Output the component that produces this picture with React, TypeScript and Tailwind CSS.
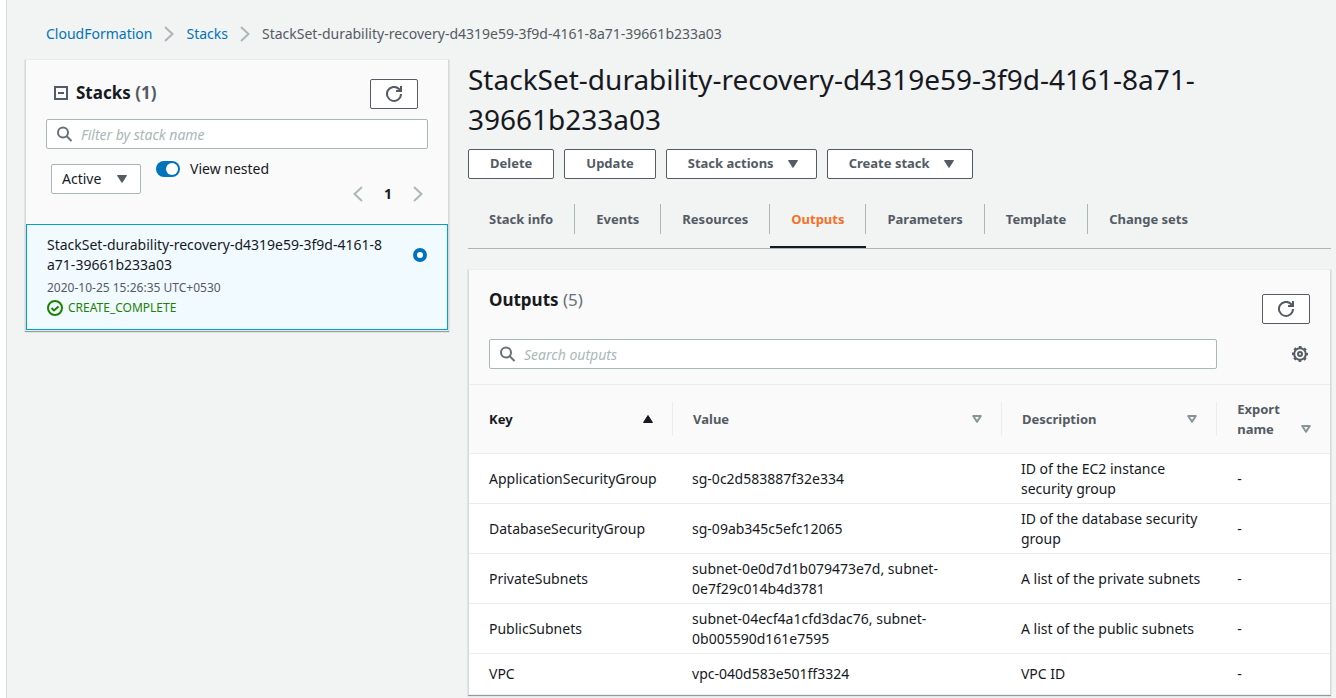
import React, { useState, type ReactNode } from "react";

const FULL_NAME = "StackSet-durability-recovery-d4319e59-3f9d-4161-8a71-39661b233a03";

const TABS = ["Stack info", "Events", "Resources", "Outputs", "Parameters", "Template", "Change sets"];

const OUTPUTS = [
  { key: "ApplicationSecurityGroup", value: "sg-0c2d583887f32e334", description: "ID of the EC2 instance security group" },
  { key: "DatabaseSecurityGroup", value: "sg-09ab345c5efc12065", description: "ID of the database security group" },
  { key: "PrivateSubnets", value: "subnet-0e0d7d1b079473e7d, subnet-0e7f29c014b4d3781", description: "A list of the private subnets" },
  { key: "PublicSubnets", value: "subnet-04ecf4a1cfd3dac76, subnet-0b005590d161e7595", description: "A list of the public subnets" },
  { key: "VPC", value: "vpc-040d583e501ff3324", description: "VPC ID" },
];

function Chevron({ flip = false }: { flip?: boolean }) {
  return (
    <svg viewBox="0 0 10 16" className={flip ? "h-4 w-2.5 rotate-180" : "h-4 w-2.5"} fill="none" stroke="#aab7b8" strokeWidth="2" aria-hidden="true">
      <path d="M1 1l7.5 7L1 15" />
    </svg>
  );
}

function SearchIcon() {
  return (
    <svg viewBox="0 0 16 16" className="size-4 shrink-0" fill="none" stroke="#687078" strokeWidth="2" aria-hidden="true">
      <circle cx="6" cy="6.500" r="5" />
      <path d="M9.500 10l5 5" />
    </svg>
  );
}

function RefreshIcon() {
  return (
    <svg viewBox="0 0 16 16" className="size-4" fill="none" stroke="#545b64" strokeWidth="2" aria-hidden="true">
      <path d="M15 8a7 7 0 1 1-2-5l2 2" />
      <path d="M15 0v5h-5" />
    </svg>
  );
}

function CaretDown({ className = "" }: { className?: string }) {
  return (
    <svg viewBox="0 0 10 8" className={"h-2 w-2.5 shrink-0 " + className} fill="#545b64" stroke="#545b64" strokeLinejoin="round" aria-hidden="true">
      <path d="M.5.5h9L5 7.5z" />
    </svg>
  );
}

function SortIcon({ active = false }: { active?: boolean }) {
  return active ? (
    <svg viewBox="0 0 10 8" className="h-2 w-2.5 shrink-0" fill="#16191f" stroke="#16191f" strokeLinejoin="round" aria-hidden="true">
      <path d="M.5 7.5h9L5 .5z" />
    </svg>
  ) : (
    <svg viewBox="0 0 10 8" className="h-2 w-2.5 shrink-0" fill="none" stroke="#879596" strokeWidth="2" strokeLinejoin="round" aria-hidden="true">
      <path d="M1.200 1h7.600L5 6.800z" />
    </svg>
  );
}

function GearIcon() {
  return (
    <svg viewBox="0 0 16 16" className="size-4" fill="none" stroke="#545b64" strokeWidth="2" aria-hidden="true">
      <circle cx="8" cy="8" r="5.800" />
      <circle cx="8" cy="8" r="7" strokeDasharray="2.749 2.749" strokeDashoffset="1.374" />
      <circle cx="8" cy="8" r="2" />
    </svg>
  );
}

function RefreshButton() {
  return (
    <button type="button" aria-label="Refresh" className="flex h-[30px] w-12 items-center justify-center rounded-xs border border-[#545b64] bg-white">
      <RefreshIcon />
    </button>
  );
}

function ActionButton({ children, menu = false }: { children: ReactNode; menu?: boolean }) {
  return (
    <button type="button" className={"flex h-[30px] items-center gap-3.5 rounded-xs border border-[#545b64] bg-white pl-[21px] text-[13px] font-bold text-[#545b64] " + (menu ? "pr-[18px]" : "pr-[21px]")}>
      {children}
      {menu && <CaretDown />}
    </button>
  );
}

function SearchBox({ label }: { label: string }) {
  return (
    <label className="flex h-[30px] w-full items-center gap-2 rounded-xs border border-[#aab7b8] bg-white px-2.5">
      <SearchIcon />
      <input type="search" aria-label={label} placeholder={label} className="w-full min-w-0 bg-transparent pt-0.5 text-sm text-[#16191f] italic outline-none placeholder:text-[#aab7b8]" />
    </label>
  );
}

function StackList() {
  const [nested, setNested] = useState(true);
  return (
    <aside className="border border-[#eaeded] border-x-[#d5dbdb] bg-[#fafafa] shadow-[0_1px_1px_0_rgba(0,28,36,0.4)]">
      <div className="flex flex-col px-5 pt-[19px] pb-5">
        <div className="flex items-start justify-between pr-2.5 pl-2">
          <h2 className="flex items-center gap-2 text-[17px] leading-7 font-bold text-[#16191f]">
            <button type="button" aria-label="Collapse stack list">
              <svg viewBox="0 0 14 14" className="size-3.5" fill="none" stroke="#545b64" strokeWidth="2" aria-hidden="true">
                <path d="M1 1h12v12H1zM4 7h6" />
              </svg>
            </button>
            <span>Stacks <span className="text-[#545b64]">(1)</span></span>
          </h2>
          <RefreshButton />
        </div>
        <div className="mt-2.5">
          <SearchBox label="Filter by stack name" />
        </div>
        <div className="mt-2.5 flex items-start px-[5px] text-sm leading-5 text-[#16191f]">
          <div className="relative mt-[5px] flex items-center">
            <select aria-label="Stack status" className="h-[30px] w-[90px] appearance-none rounded-xs border border-[#aab7b8] bg-white px-2.5">
              <option>Active</option>
              <option>Deleted</option>
            </select>
            <CaretDown className="pointer-events-none absolute right-3.5" />
          </div>
          <label className="ml-[15px] flex items-center gap-2.5">
            <input type="checkbox" role="switch" checked={nested} onChange={(e) => setNested(e.target.checked)} className="peer sr-only" />
            <span className="flex h-4 w-6 justify-start rounded-full bg-[#879596] p-0.5 peer-checked:justify-end peer-checked:bg-[#0073bb]">
              <span className="size-3 rounded-full bg-white" />
            </span>
            View nested
          </label>
          <nav aria-label="Stack pages" className="mt-[25px] ml-auto flex items-center gap-[21px]">
            <button type="button" aria-label="Previous page"><Chevron flip /></button>
            <span className="font-bold">1</span>
            <button type="button" aria-label="Next page"><Chevron /></button>
          </nav>
        </div>
      </div>
      <label className="flex items-start justify-between border border-[#00a1c9] bg-[#f1faff] px-5 pt-2.5 pb-[11px]">
        <span className="flex w-[342px] flex-col text-[#16191f]">
          <span className="text-sm leading-5 break-all">{FULL_NAME}</span>
          <span className="mt-[3px] text-xs leading-5 text-[#545b64]">2020-10-25 15:26:35 UTC+0530</span>
          <span className="flex items-center gap-[5px] text-xs leading-5 text-[#1d8102]">
            <svg viewBox="0 0 16 16" className="size-4" fill="none" stroke="#1d8102" strokeWidth="2" aria-hidden="true">
              <circle cx="8" cy="8" r="7" />
              <path d="M4.500 8l2.500 2.500 4.500-4" />
            </svg>
            CREATE_COMPLETE
          </span>
        </span>
        <input type="radio" name="stack" defaultChecked aria-label={FULL_NAME} className="mt-[13px] size-3.5 appearance-none rounded-full border border-[#aab7b8] bg-white checked:border-4 checked:border-[#0073bb]" />
      </label>
    </aside>
  );
}

function OutputsTable() {
  const heads = [
    { label: "Key", width: "w-[23.7%]" },
    { label: "Value", width: "w-[38.2%]" },
    { label: "Description", width: "w-[25%]" },
    { label: "Export name", width: "w-[13.1%]" },
  ];
  return (
    <section className="mt-5 border border-[#eaeded] border-x-[#d5dbdb] bg-[#fafafa] shadow-[0_1px_1px_0_rgba(0,28,36,0.4)]">
      <div className="flex flex-col px-5 pt-[15px] pb-[15px]">
        <div className="flex items-start justify-between">
          <h2 className="text-[17px] leading-[30px] font-bold text-[#16191f]">
            Outputs <span className="font-normal text-[#687078]">(5)</span>
          </h2>
          <div className="mt-[9px]"><RefreshButton /></div>
        </div>
        <div className="mt-[15px] flex items-center justify-between">
          <div className="w-[728px] max-w-[90%]"><SearchBox label="Search outputs" /></div>
          <button type="button" aria-label="Preferences" className="mr-0.5"><GearIcon /></button>
        </div>
      </div>
      <table className="w-full table-fixed border-collapse text-left text-sm leading-5 text-[#16191f]">
        <thead>
          <tr className="border-y border-[#eaeded] text-[13px]">
            {heads.map((h, i) => (
              <th key={h.label} className={"py-[14px] font-bold " + h.width + (i === 0 ? "" : " text-[#545b64]")}>
                <div className={"flex min-h-[34px] items-center justify-between pr-[19px] pl-5 leading-5 " + (i < 3 ? "border-r border-[#eaeded]" : "")}>
                  <span>{h.label}</span>
                  <button type="button" aria-label={"Sort by " + h.label} className={i === 3 ? "mt-5" : ""}>
                    <SortIcon active={i === 0} />
                  </button>
                </div>
              </th>
            ))}
          </tr>
        </thead>
        <tbody className="bg-white">
          {OUTPUTS.map((o) => (
            <tr key={o.key} className="h-10 border-b border-[#eaeded] last:border-b-0">
              <td className="pt-[5px] pb-1 pl-5">{o.key}</td>
              <td className="pt-[5px] pb-1 pr-10 pl-[19px]">{o.value}</td>
              <td className="pt-[5px] pb-1 pr-2 pl-[19px]">{o.description}</td>
              <td className="pt-[5px] pb-1 pl-5">-</td>
            </tr>
          ))}
        </tbody>
      </table>
    </section>
  );
}

export default function App() {
  const [tab, setTab] = useState("Outputs");
  return (
    <div className="min-h-screen bg-white pl-1.5 font-['Noto_Sans',sans-serif]">
      <div className="min-h-screen border-l border-[#d5dbdb] bg-[#f2f3f3] pr-[5px] pl-[18px]">
        <nav aria-label="Breadcrumb" className="flex items-center gap-3 pt-6 pl-[21px] text-sm leading-5">
          <a href="#cloudformation" className="text-[#0073bb]">CloudFormation</a>
          <Chevron />
          <a href="#stacks" className="text-[#0073bb]">Stacks</a>
          <Chevron />
          <span className="text-[#545b64]">{FULL_NAME}</span>
        </nav>
        <div className="mt-[15px] flex items-start gap-[19px]">
          <div className="w-[424px] shrink-0"><StackList /></div>
          <main className="min-w-0 flex-1">
            <h1 className="w-[750px] max-w-full text-[28px] leading-10 text-[#16191f]">{FULL_NAME}</h1>
            <div className="mt-2.5 flex gap-2.5">
              <ActionButton>Delete</ActionButton>
              <ActionButton>Update</ActionButton>
              <ActionButton menu>Stack actions</ActionButton>
              <ActionButton menu>Create stack</ActionButton>
            </div>
            <div role="tablist" className="mt-[25px] flex border-b border-[#aab7b8]">
              {TABS.map((t, i) => (
                <button
                  key={t}
                  type="button"
                  role="tab"
                  aria-selected={t === tab}
                  onClick={() => setTab(t)}
                  className={"border-b-2 text-[13px] font-bold " + (t === tab ? "border-[#16191f] text-[#f5702a]" : "border-transparent text-[#545b64]")}
                >
                  <span className={"mb-3 block px-[21px] leading-[30px] " + (i < TABS.length - 1 ? "border-r border-[#aab7b8]" : "")}>{t}</span>
                </button>
              ))}
            </div>
            <OutputsTable />
          </main>
        </div>
      </div>
    </div>
  );
}
